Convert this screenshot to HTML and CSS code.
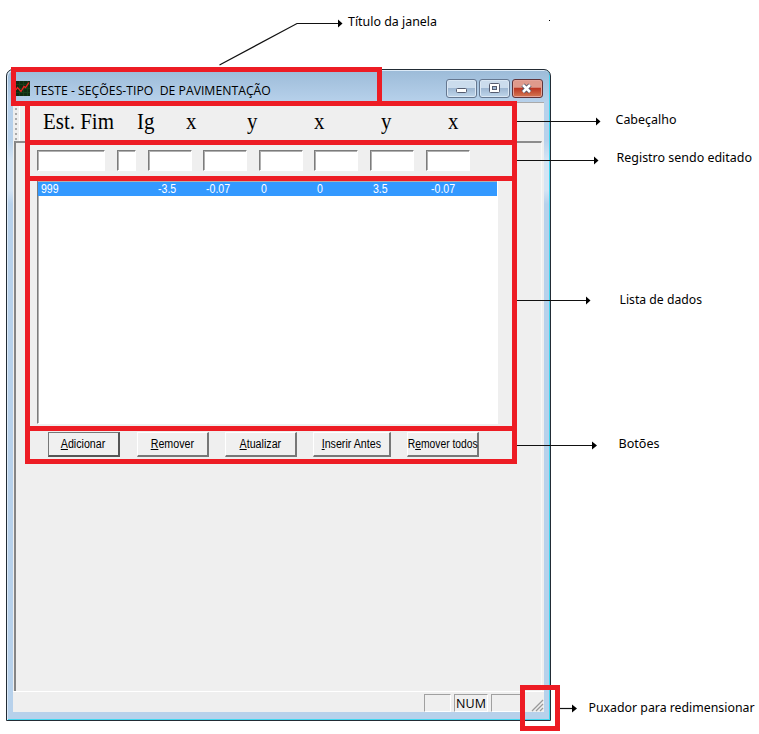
FILE: index.html
```html
<!DOCTYPE html>
<html lang="pt">
<head>
<meta charset="utf-8">
<title>Seções-tipo de pavimentação</title>
<link rel="stylesheet" href="styles.css">
</head>
<body>
<main class="window">
  <header class="titlebar">
    <svg class="app-icon" width="14" height="15" viewBox="0 0 14 15"><rect width="14" height="15" fill="#102b12"/><path d="M0 3.5H14M0 7.5H14M0 11.5H14M3.5 0V15M7.5 0V15M11.5 0V15" stroke="#164019" stroke-width="1"/><path d="M0 9L1.500 6.500L5 10.500L8 5.500L9.500 6.500L13 1.500" fill="none" stroke="#f02222" stroke-width="1.3"/></svg>
    <h1><span class="title-text">TESTE - SEÇÕES-TIPO&nbsp; DE PAVIMENTAÇÃO</span></h1>
    <div class="captions">
      <button class="caption"><svg width="29" height="17"><rect x="9.5" y="8.5" width="10" height="4" rx="1" fill="#fff" stroke="#555c70"/></svg></button>
      <button class="caption"><svg width="29" height="17"><rect x="9.5" y="3.5" width="10" height="9" rx="1" fill="#fff" stroke="#555c70"/><rect x="12.5" y="6.5" width="4" height="3" fill="#9fb9d5" stroke="#555c70"/></svg></button>
      <button class="caption close"><svg width="29" height="17"><path d="M10 5L17 12M17 5L10 12" stroke="#535466" stroke-width="4.4"/><path d="M10 5L17 12M17 5L10 12" stroke="#fff" stroke-width="2.6"/></svg></button>
    </div>
  </header>
  <section class="client">
    <div class="toolbar">
      <div class="gripper"></div>
      <div class="columns"><span>Est. Fim</span><span>Ig</span><span>x</span><span>y</span><span>x</span><span>y</span><span>x</span></div>
    </div>
    <div class="view">
      <div class="record"><input class="station"><input class="ig"><input><input><input><input><input><input></div>
      <div class="list"><div class="row"><span>999</span><span>-3.5</span><span>-0.07</span><span>0</span><span>0</span><span>3.5</span><span>-0.07</span></div></div>
      <div class="actions">
        <button class="default"><span><u>A</u>dicionar</span></button>
        <button><span><u>R</u>emover</span></button>
        <button><span><u>A</u>tualizar</span></button>
        <button class="wide"><span><u>I</u>nserir Antes</span></button>
        <button class="tight"><span>R<u>e</u>mover todos</span></button>
      </div>
    </div>
    <footer class="status"><div class="pane"></div><div class="pane num">NUM</div><div class="pane last"></div>
      <svg class="grip" width="13" height="13"><path d="M1 12L12 1M5 12L12 5M9 12L12 9" stroke="#999" stroke-width="1.3"/></svg>
    </footer>
  </section>
</main>
<svg class="callouts" width="759" height="734" viewBox="0 0 759 734">
  <g class="boxes">
    <rect x="13.5" y="69.5" width="366" height="34"/>
    <rect x="27.5" y="103.5" width="487" height="39"/>
    <rect x="27.5" y="142.5" width="487" height="36"/>
    <rect x="27.5" y="178.5" width="487" height="250"/>
    <rect x="27.5" y="428.5" width="487" height="33"/>
    <rect x="522.5" y="687.5" width="35" height="41"/>
  </g>
  <g class="lines">
    <path d="M219.5 65L297 23.5H338"/>
    <path d="M517 121.5H597"/>
    <path d="M517 160.500H595"/>
    <path d="M517 300.500H587"/>
    <path d="M517 445.500H593"/>
    <path d="M560 708.500H573"/>
  </g>
  <g class="heads">
    <path d="M338 19.500L342.500 23.500L338 27.500Z"/>
    <path d="M596 117.500L600.500 121.500L596 125.500Z"/>
    <path d="M594 156.500L598.500 160.500L594 164.500Z"/>
    <path d="M586 296.500L590.500 300.500L586 304.500Z"/>
    <path d="M592 441.500L597 445.500L592 449.500Z"/>
    <path d="M572 704.500L577 708.500L572 712.500Z"/>
    <rect x="549" y="20" width="1" height="1"/>
  </g>
  <g class="labels">
    <text x="348" y="26" textLength="89" lengthAdjust="spacingAndGlyphs">Título da janela</text>
    <text x="615.500" y="124" textLength="61" lengthAdjust="spacingAndGlyphs">Cabeçalho</text>
    <text x="616.500" y="162" textLength="135.500" lengthAdjust="spacingAndGlyphs">Registro sendo editado</text>
    <text x="619.500" y="304" textLength="82.500" lengthAdjust="spacingAndGlyphs">Lista de dados</text>
    <text x="618.500" y="448" textLength="41" lengthAdjust="spacingAndGlyphs">Botões</text>
    <text x="588.500" y="712" textLength="166" lengthAdjust="spacingAndGlyphs">Puxador para redimensionar</text>
  </g>
</svg>
</body>
</html>
```
FILE: styles.css
```css
* { box-sizing: border-box; }
body { margin: 0; background: #fff; position: relative; width: 759px; height: 734px; overflow: hidden; padding: 69px 0 0 6px; font-family: "Liberation Sans", sans-serif; }
.window { width: 545px; height: 652px; border: 1px solid #222c35; border-radius: 7px 7px 0 0; padding: 0 6px 8px; background: linear-gradient(#9cbbd8, #b7d1eb 32px, #b7d1eb 70px, #d4e4f4 90px, #d4e4f4 120px, #b7d1eb 134px); box-shadow: inset 1px 1px 0 #dceaf7, inset -1px -1px 0 #42d6ef; display: flex; flex-direction: column; }
.titlebar { height: 32px; display: flex; flex: none; align-items: flex-start; padding: 9px 1px 0 3px; }
.app-icon { margin-top: 2px; flex: none; }
h1 { margin: 2px 0 0 4px; flex: 1; font: 12px/20px "Open Sans", sans-serif; color: #000; white-space: pre; }
.title-text { display: inline-block; transform: scaleX(1.02); transform-origin: left; }
.captions { display: flex; gap: 2px; }
.caption { width: 31px; height: 19px; border: 1px solid #657790; border-radius: 3px; padding: 0; background: linear-gradient(#cbdced 0 45%, #9fb8d3 50%, #c0d6eb); box-shadow: inset 0 0 0 1px #dbe8f5; display: flex; }
.caption svg { display: block; }
.close { border-color: #60343b; background: linear-gradient(#df9a8c 0 42%, #bc3824 50%, #d57853); box-shadow: inset 0 0 0 1px #e5a499; }
.client { flex: 1; background: #efefef; display: flex; flex-direction: column; }
.toolbar { height: 39px; border-top: 1px solid #aaa; display: flex; flex: none; }
.gripper { width: 7px; background: radial-gradient(circle at 2px 2px, #aaa 1px, transparent 1.3px) 1px 1px / 5px 5px; border-right: 1px solid #fff; margin-top: 3px; }
.columns { display: grid; grid-template-columns: 94px 49px 61px 67px 67px 67px 40px; margin-left: 23px; font: 23px/38px "Liberation Serif", serif; color: #000; }
.columns span { transform: scaleX(.91); transform-origin: left; white-space: nowrap; }
.view { height: 550px; flex: none; margin: 0 2px 0 1px; border-top: 2px solid #8c8c8c; border-left: 2px solid #858585; border-right: 1px solid #f8f8f8; padding: 7px 0 0 21px; }
.record { display: flex; height: 21px; gap: 11.600px; }
input, .list { border: 1px solid; border-color: #7c7c7c #fff #fff #7c7c7c; box-shadow: inset 1px 1px 0 #b0b0b0; background: #fff; border-radius: 0; padding: 0; margin: 0; }
input { width: 44px; height: 21px; }
.station { width: 68px; }
.ig { width: 19.500px; }
.list { width: 461px; height: 244px; margin-top: 9px; padding: 1px 0 0; }
.row { height: 14px; width: 459px; background: #3399ff; color: #fff; display: grid; grid-template-columns: 117px 48px 55px 56px 56px 58px 50px; padding-left: 3px; font-size: 12px; line-height: 15px; }
.row span { transform: scaleX(.88); transform-origin: left; }
.actions { display: flex; margin: 8px 0 0 11px; gap: 16.500px; }
.actions button { width: 72px; height: 25px; padding: 0; background: #f0f0f0; border: solid; border-width: 1px 2px 2px 1px; border-color: #fff #777 #777 #fff; border-radius: 0; font: 12px/23px "Liberation Sans", sans-serif; color: #000; display: flex; justify-content: center; white-space: nowrap; }
.actions button.default { border-color: #777 #555 #555 #777; }
.actions .wide { width: 78px; margin-left: -1px; }
.actions span { transform: scaleX(.89); flex: none; }
.actions .tight span { transform: scaleX(.86); }
.status { height: 21px; border-top: 1px solid #fff; display: flex; padding: 2px 0 0 411px; flex: none; position: relative; gap: 3px; }
.pane { width: 27px; height: 18px; border: 1px solid; border-color: #a0a0a0 #fff #fff #a0a0a0; flex: none; }
.num { width: 34px; font: 12.500px/17px "Open Sans", sans-serif; text-align: center; padding: 0; color: #000; }
.last { width: 31px; }
.grip { position: absolute; right: 0; bottom: 0; }
.callouts { position: absolute; left: 0; top: 0; }
.boxes { fill: none; stroke: #ed1c24; stroke-width: 5px; }
.lines { fill: none; stroke: #111; stroke-width: 1.200px; }
.heads { fill: #000; }
.labels { font: 12.500px "Noto Sans", sans-serif; fill: #000; }
```
